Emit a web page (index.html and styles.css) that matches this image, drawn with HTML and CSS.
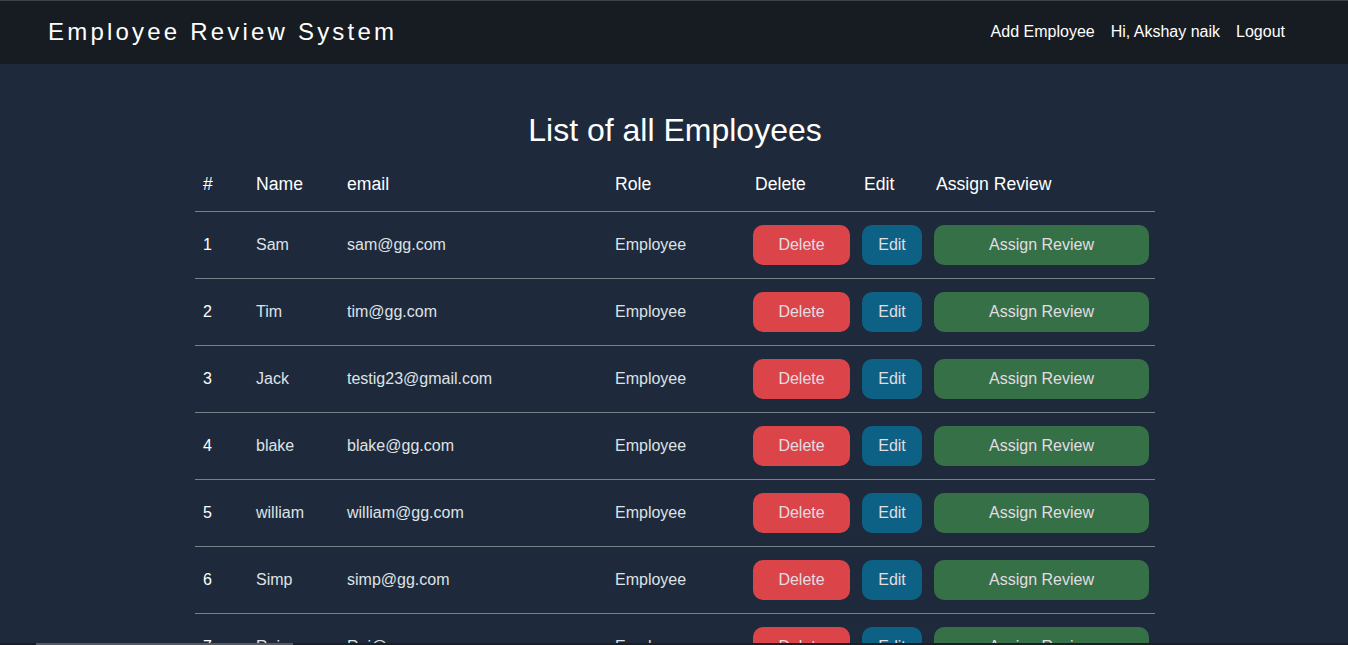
FILE: index.html
```html
<!DOCTYPE html>
<html lang="en">
<head>
<meta charset="utf-8">
<title>Employee Review System</title>
<link rel="stylesheet" href="styles.css">
</head>
<body>
<nav class="navbar">
  <a class="brand" href="#">Employee Review System</a>
  <div class="nav-links">
    <a href="#">Add Employee</a>
    <a href="#">Hi, Akshay naik</a>
    <a href="#">Logout</a>
  </div>
</nav>
<div class="page">
<main class="main">
  <h1 class="title">List of all Employees</h1>
  <table class="emp-table">
    <colgroup>
      <col class="c-num"><col class="c-name"><col class="c-email"><col class="c-role"><col class="c-del"><col class="c-edit"><col class="c-assign">
    </colgroup>
    <thead>
      <tr><th>#</th><th>Name</th><th>email</th><th>Role</th><th>Delete</th><th>Edit</th><th>Assign Review</th></tr>
    </thead>
    <tbody>
      <tr><th>1</th><td>Sam</td><td>sam@gg.com</td><td>Employee</td><td class="btn-cell"><button class="btn btn-del">Delete</button></td><td class="btn-cell"><button class="btn btn-edit">Edit</button></td><td class="btn-cell"><button class="btn btn-assign">Assign Review</button></td></tr>
      <tr><th>2</th><td>Tim</td><td>tim@gg.com</td><td>Employee</td><td class="btn-cell"><button class="btn btn-del">Delete</button></td><td class="btn-cell"><button class="btn btn-edit">Edit</button></td><td class="btn-cell"><button class="btn btn-assign">Assign Review</button></td></tr>
      <tr><th>3</th><td>Jack</td><td>testig23@gmail.com</td><td>Employee</td><td class="btn-cell"><button class="btn btn-del">Delete</button></td><td class="btn-cell"><button class="btn btn-edit">Edit</button></td><td class="btn-cell"><button class="btn btn-assign">Assign Review</button></td></tr>
      <tr><th>4</th><td>blake</td><td>blake@gg.com</td><td>Employee</td><td class="btn-cell"><button class="btn btn-del">Delete</button></td><td class="btn-cell"><button class="btn btn-edit">Edit</button></td><td class="btn-cell"><button class="btn btn-assign">Assign Review</button></td></tr>
      <tr><th>5</th><td>william</td><td>william@gg.com</td><td>Employee</td><td class="btn-cell"><button class="btn btn-del">Delete</button></td><td class="btn-cell"><button class="btn btn-edit">Edit</button></td><td class="btn-cell"><button class="btn btn-assign">Assign Review</button></td></tr>
      <tr><th>6</th><td>Simp</td><td>simp@gg.com</td><td>Employee</td><td class="btn-cell"><button class="btn btn-del">Delete</button></td><td class="btn-cell"><button class="btn btn-edit">Edit</button></td><td class="btn-cell"><button class="btn btn-assign">Assign Review</button></td></tr>
      <tr><th>7</th><td>Raj</td><td>Raj@gg.com</td><td>Employee</td><td class="btn-cell"><button class="btn btn-del">Delete</button></td><td class="btn-cell"><button class="btn btn-edit">Edit</button></td><td class="btn-cell"><button class="btn btn-assign">Assign Review</button></td></tr>
    </tbody>
  </table>
</main>
</div>
<div class="hscroll"><div class="hthumb"></div></div>
</body>
</html>
```
FILE: styles.css
```css
html, body {
  margin: 0;
  padding: 0;
}
body {
  background: #1e2a3b;
  color: #dee2e6;
  font-family: "Liberation Sans", Arial, sans-serif;
  font-size: 16px;
  border-top: 1px solid #3d4044;
  overflow: hidden;
  height: 644px;
}
a {
  color: #ffffff;
  text-decoration: none;
}
.navbar {
  box-sizing: border-box;
  height: 63px;
  background: #171c23;
  display: flex;
  align-items: center;
  justify-content: space-between;
  padding: 0 63px 2px 48px;
}
.brand {
  font-size: 24px;
  letter-spacing: 3.2px;
  color: #ffffff;
}
.nav-links {
  display: flex;
  gap: 16px;
  font-size: 16px;
}
.page {
  padding-left: 2px;
}
.main {
  width: 960px;
  margin: 0 auto;
  padding-top: 47px;
}
.title {
  margin: 0 0 9px;
  font-size: 32px;
  line-height: 38px;
  font-weight: normal;
  text-align: center;
  color: #ffffff;
}
.emp-table {
  width: 960px;
  border-collapse: collapse;
  table-layout: fixed;
}
.c-num { width: 53px; }
.c-name { width: 91px; }
.c-email { width: 268px; }
.c-role { width: 140px; }
.c-del { width: 109px; }
.c-edit { width: 72px; }
.c-assign { width: 227px; }
.emp-table thead th {
  height: 53px;
  padding: 0 8px;
  text-align: left;
  font-weight: normal;
  font-size: 17.6px;
  color: #ffffff;
  border-bottom: 1px solid #7a8089;
}
.emp-table tbody th,
.emp-table tbody td {
  height: 66px;
  padding: 0 8px;
  text-align: left;
  font-weight: normal;
  border-bottom: 1px solid #7a8089;
}
.emp-table tbody th {
  color: #ffffff;
}
.emp-table tbody td.btn-cell {
  padding: 0 6px;
}
.btn {
  display: block;
  width: 100%;
  height: 40px;
  border: none;
  border-radius: 10px;
  font-family: "Liberation Sans", Arial, sans-serif;
  font-size: 16px;
  color: #e2dde2;
  cursor: pointer;
}
.btn-del { background: #db4549; }
.btn-edit { background: #0d6185; }
.btn-assign { background: #367047; }
.hscroll {
  position: fixed;
  left: 0;
  right: 0;
  bottom: 0;
  height: 2px;
  background: #1b1e22;
}
.hthumb {
  margin-left: 36px;
  width: 257px;
  height: 2px;
  background: #56595d;
}
```
